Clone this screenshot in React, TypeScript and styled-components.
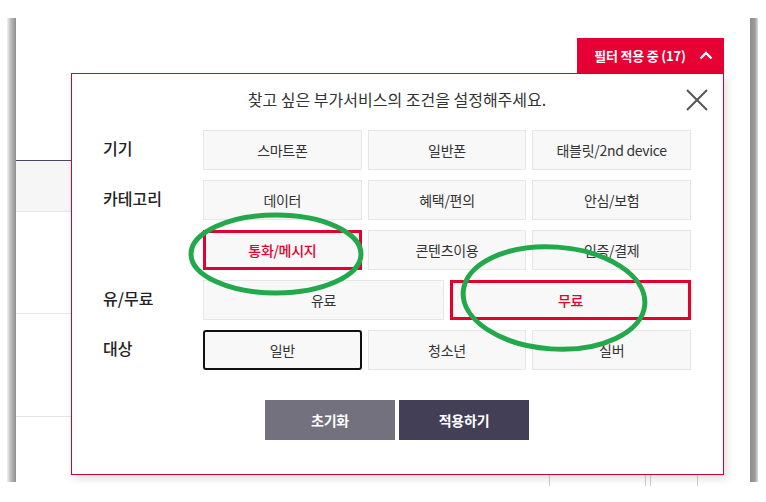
import React from "react";
import styled, { createGlobalStyle } from "styled-components";

const GlobalStyle = createGlobalStyle`
  html, body { margin: 0; padding: 0; background: #ffffff; }
  body { font-family: "Noto Sans CJK KR", "Noto Sans", sans-serif; color: #333; }
  * { box-sizing: border-box; }
`;

const Stage = styled.div`
  width: 766px;
  height: 502px;
  padding: 18px 8px 0 7px;
  display: flex;
  align-items: flex-start;
  overflow: hidden;
`;

const ShadowBar = styled.div<{ $side: "left" | "right" }>`
  flex: none;
  width: ${(p) => (p.$side === "left" ? 9 : 8)}px;
  height: 464px;
  background: ${(p) =>
    p.$side === "left"
      ? "linear-gradient(to right, #f2f2f2 0%, #c4c4c4 35%, #8e8e8e 100%)"
      : "linear-gradient(to right, #8e8e8e 0%, #9a9a9a 60%, #dcdcdc 100%)"};
`;

const Page = styled.div`
  position: relative;
  flex: 1;
  height: 468px;
  background: #fff;
`;

const BgTable = styled.div`
  width: 707px;
  height: 100%;
  display: flex;
  flex-direction: column;
`;

const Spacer = styled.div<{ $h: number }>`
  height: ${(p) => p.$h}px;
  flex: none;
`;

const HeadRow = styled.div`
  flex: none;
  height: 52px;
  border-top: 1px solid #4b4660;
  border-bottom: 1px solid #e6e6e6;
  background: #f6f6f6;
`;

const BodyRow = styled.div<{ $h: number }>`
  flex: none;
  height: ${(p) => p.$h}px;
  border-bottom: 1px solid #e6e6e6;
`;

const FootRow = styled.div`
  flex: 1;
  display: grid;
  grid-template-columns: 533px 96px 5px 47px 1fr;
`;

const FootCell = styled.div<{ $line?: boolean }>`
  border-left: ${(p) => (p.$line ? "1px solid #cfcfcf" : "none")};
`;

const FilterToggle = styled.button`
  position: absolute;
  left: 561px;
  top: 20px;
  width: 147px;
  height: 35px;
  border: none;
  margin: 0;
  padding: 0 0 0 6px;
  background: #e60033;
  color: #fff;
  font-family: "Noto Sans CJK KR", sans-serif;
  font-size: 13px;
  font-weight: 700;
  letter-spacing: -0.2px;
  display: flex;
  align-items: center;
  justify-content: center;
  gap: 13px;
`;

const Modal = styled.div`
  position: absolute;
  left: 55px;
  top: 55px;
  width: 653px;
  height: 402px;
  border: 1px solid #d4002e;
  background: #fff;
  box-shadow: 3px 4px 8px rgba(0, 0, 0, 0.12);
  padding: 15px 32px 0 31px;
  display: flex;
  flex-direction: column;
`;

const Title = styled.h2`
  margin: 0 0 20px 0;
  font-size: 16px;
  font-weight: 400;
  line-height: 21px;
  text-align: center;
  color: #333;
  letter-spacing: 0;
`;

const CloseButton = styled.button`
  position: absolute;
  top: 14px;
  right: 14px;
  width: 24px;
  height: 24px;
  padding: 0;
  border: none;
  background: transparent;
  display: flex;
`;

const FilterRow = styled.div`
  display: grid;
  grid-template-columns: 100px 1fr;
  margin-bottom: 10px;
`;

const RowLabel = styled.div`
  padding-top: 8px;
  font-size: 16px;
  font-weight: 500;
  line-height: 20px;
  color: #222;
  letter-spacing: 0;
`;

const OptionGrid = styled.div<{ $cols: number }>`
  display: grid;
  grid-template-columns: repeat(${(p) => p.$cols}, 1fr);
  gap: 10px 6px;
`;

type Mode = "none" | "red" | "dark";

const Option = styled.button<{ $mode: Mode }>`
  height: 40px;
  margin: 0;
  padding: 0;
  background: #f8f8f8;
  font-family: "Noto Sans CJK KR", sans-serif;
  font-size: 14px;
  letter-spacing: -0.3px;
  color: ${(p) => (p.$mode === "red" ? "#e4002b" : "#333")};
  font-weight: ${(p) => (p.$mode === "red" ? 500 : 400)};
  border: ${(p) =>
    p.$mode === "red"
      ? "3px solid #e4002b"
      : p.$mode === "dark"
      ? "2px solid #111"
      : "1px solid #e6e6e6"};
  border-radius: ${(p) => (p.$mode === "dark" ? "3px" : "0")};
`;

const Actions = styled.div`
  margin-top: 20px;
  display: flex;
  justify-content: center;
  gap: 4px;
`;

const ActionButton = styled.button<{ $primary?: boolean }>`
  width: 130px;
  height: 40px;
  border: none;
  margin: 0;
  padding: 0;
  background: ${(p) => (p.$primary ? "#423f57" : "#74717f")};
  color: #fff;
  font-family: "Noto Sans CJK KR", sans-serif;
  font-size: 14px;
  font-weight: 700;
  letter-spacing: -0.2px;
`;

const Annotations = styled.svg`
  position: absolute;
  left: 0;
  top: 0;
  width: 734px;
  height: 468px;
  pointer-events: none;
`;

type Opt = { text: string; mode?: Mode };
type Group = { label: string; cols: number; options: Opt[] };

const groups: Group[] = [
  {
    label: "기기",
    cols: 3,
    options: [{ text: "스마트폰" }, { text: "일반폰" }, { text: "태블릿/2nd device" }],
  },
  {
    label: "카테고리",
    cols: 3,
    options: [
      { text: "데이터" },
      { text: "혜택/편의" },
      { text: "안심/보험" },
      { text: "통화/메시지", mode: "red" },
      { text: "콘텐츠이용" },
      { text: "인증/결제" },
    ],
  },
  {
    label: "유/무료",
    cols: 2,
    options: [{ text: "유료" }, { text: "무료", mode: "red" }],
  },
  {
    label: "대상",
    cols: 3,
    options: [{ text: "일반", mode: "dark" }, { text: "청소년" }, { text: "실버" }],
  },
];

export default function App() {
  return (
    <>
      <GlobalStyle />
      <Stage>
        <ShadowBar $side="left" />
        <Page>
          <BgTable>
            <Spacer $h={142} />
            <HeadRow />
            <BodyRow $h={102} />
            <BodyRow $h={103} />
            <FootRow>
              <FootCell />
              <FootCell $line />
              <FootCell $line />
              <FootCell $line />
              <FootCell $line />
            </FootRow>
          </BgTable>

          <FilterToggle>
            <span>필터 적용 중 (17)</span>
            <svg width="14" height="9" viewBox="0 0 14 9">
              <path d="M1.5 7.5 L7 2 L12.5 7.5" fill="none" stroke="#fff" strokeWidth="2.4" />
            </svg>
          </FilterToggle>

          <Modal>
            <Title>찾고 싶은 부가서비스의 조건을 설정해주세요.</Title>
            <CloseButton aria-label="닫기">
              <svg width="24" height="24" viewBox="0 0 24 24">
                <path d="M2 2 L22 22 M22 2 L2 22" stroke="#555" strokeWidth="2" fill="none" />
              </svg>
            </CloseButton>
            {groups.map((g) => (
              <FilterRow key={g.label}>
                <RowLabel>{g.label}</RowLabel>
                <OptionGrid $cols={g.cols}>
                  {g.options.map((o) => (
                    <Option key={o.text} $mode={o.mode ?? "none"}>
                      {o.text}
                    </Option>
                  ))}
                </OptionGrid>
              </FilterRow>
            ))}
            <Actions>
              <ActionButton>초기화</ActionButton>
              <ActionButton $primary>적용하기</ActionButton>
            </Actions>
          </Modal>

          <Annotations viewBox="0 0 734 468">
            <ellipse cx="260" cy="236" rx="85" ry="39" fill="none" stroke="#22a94b" strokeWidth="5" />
            <ellipse
              cx="538"
              cy="280"
              rx="91"
              ry="51"
              fill="none"
              stroke="#22a94b"
              strokeWidth="5"
              transform="rotate(4 538 280)"
            />
          </Annotations>
        </Page>
        <ShadowBar $side="right" />
      </Stage>
    </>
  );
}
